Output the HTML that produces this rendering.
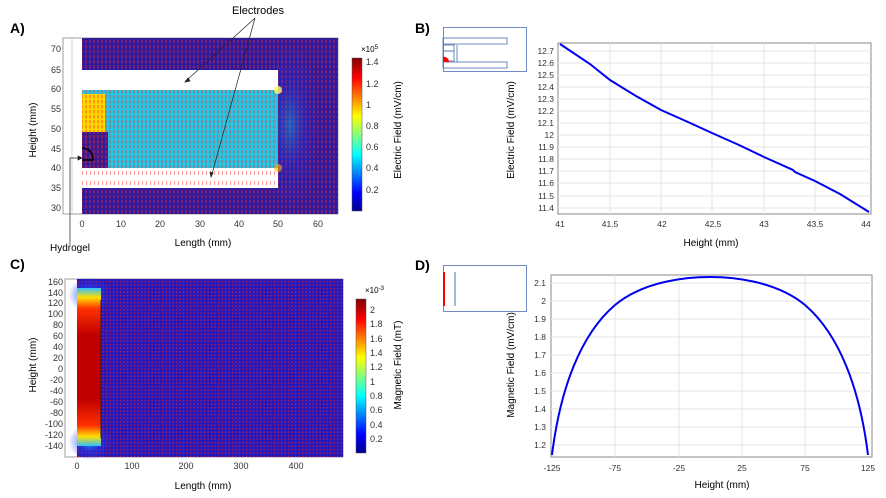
<!DOCTYPE html>
<html><head><meta charset="utf-8"><style>
html,body{margin:0;padding:0;background:#fff;width:886px;height:498px;overflow:hidden}
svg{display:block;font-family:"Liberation Sans",sans-serif}
</style></head><body>
<svg width="886" height="498" viewBox="0 0 886 498" xmlns="http://www.w3.org/2000/svg">
<defs>
<pattern id="ar" width="4" height="5" patternUnits="userSpaceOnUse"><rect x="1.5" y="0" width="1" height="3.5" fill="#ff2a2a" opacity="0.75"/></pattern>
<pattern id="ar2" width="3.5" height="3.5" patternUnits="userSpaceOnUse"><rect x="1" y="1" width="1.3" height="1.3" fill="#d8203a" opacity="0.8"/></pattern>
<linearGradient id="jet" x1="0" y1="1" x2="0" y2="0">
<stop offset="0" stop-color="#00008f"/><stop offset="0.12" stop-color="#0000ff"/><stop offset="0.37" stop-color="#00ffff"/><stop offset="0.62" stop-color="#ffff00"/><stop offset="0.87" stop-color="#ff0000"/><stop offset="1" stop-color="#800000"/></linearGradient>
<radialGradient id="glow" cx="0.5" cy="0.5" r="0.5"><stop offset="0" stop-color="#00e0ff"/><stop offset="0.5" stop-color="#2040ff" stop-opacity="0.6"/><stop offset="1" stop-color="#2040ff" stop-opacity="0"/></radialGradient>
<linearGradient id="redbar" x1="0" y1="0" x2="0" y2="1"><stop offset="0" stop-color="#30c0ff"/><stop offset="0.06" stop-color="#ffe000"/><stop offset="0.13" stop-color="#ff3000"/><stop offset="0.3" stop-color="#c00000"/><stop offset="0.7" stop-color="#c00000"/><stop offset="0.87" stop-color="#ff3000"/><stop offset="0.94" stop-color="#ffe000"/><stop offset="1" stop-color="#30c0ff"/></linearGradient>
</defs>

<!-- ===== Panel A ===== -->
<text x="10" y="33" font-size="14" font-weight="bold">A)</text>
<text x="232" y="14" font-size="11">Electrodes</text>
<rect x="63" y="38" width="275" height="176" fill="#fff" stroke="#888" stroke-width="0.8"/>
<rect x="82" y="38" width="256" height="176" fill="#2a1aa0"/>
<rect x="82" y="38" width="256" height="176" fill="url(#ar)"/>
<rect x="260" y="40" width="60" height="170" fill="url(#glow)" opacity="0.35"/>
<rect x="82" y="70" width="196" height="20" fill="#fff"/>
<rect x="82" y="90" width="196" height="78" fill="#22c8e8"/>
<rect x="82" y="90" width="196" height="78" fill="url(#ar)"/>
<rect x="82" y="94" width="23" height="38" fill="#ffd800"/>
<rect x="82" y="94" width="23" height="38" fill="url(#ar)"/>
<rect x="82" y="132" width="26" height="36" fill="#3a1a90"/>
<rect x="82" y="132" width="26" height="36" fill="url(#ar)"/>
<path d="M82,148 A11,11 0 0 1 93,160 L82,160" fill="none" stroke="#000" stroke-width="1.5"/>
<rect x="82" y="168" width="196" height="20" fill="#fff"/>
<g stroke="#ff3030" stroke-width="1" stroke-dasharray="1 3">
<line x1="82" y1="172" x2="278" y2="172"/><line x1="82" y1="174" x2="278" y2="174"/>
<line x1="82" y1="182" x2="278" y2="182"/><line x1="82" y1="184" x2="278" y2="184"/></g>
<circle cx="278" cy="90" r="4" fill="#ffff60" opacity="0.8"/>
<circle cx="278" cy="168" r="4" fill="#ffb000" opacity="0.6"/>
<line x1="72" y1="38" x2="72" y2="214" stroke="#aaa" stroke-width="0.5"/>
<g font-size="9" fill="#333" text-anchor="end">
<text x="61" y="52">70</text><text x="61" y="73">65</text><text x="61" y="92">60</text><text x="61" y="112">55</text><text x="61" y="132">50</text><text x="61" y="152">45</text><text x="61" y="171">40</text><text x="61" y="191">35</text><text x="61" y="211">30</text></g>
<g font-size="9" fill="#333" text-anchor="middle">
<text x="82" y="227">0</text><text x="121" y="227">10</text><text x="160" y="227">20</text><text x="200" y="227">30</text><text x="239" y="227">40</text><text x="278" y="227">50</text><text x="318" y="227">60</text></g>
<text x="203" y="246" font-size="10" text-anchor="middle">Length (mm)</text>
<text transform="translate(36,130) rotate(-90)" font-size="10" text-anchor="middle">Height (mm)</text>
<rect x="352" y="58" width="10" height="153" fill="url(#jet)" stroke="#555" stroke-width="0.5"/>
<text x="361" y="52" font-size="8">×10<tspan dy="-3" font-size="6">5</tspan></text>
<g font-size="9" fill="#333"><text x="366" y="65">1.4</text><text x="366" y="87">1.2</text><text x="366" y="108">1</text><text x="366" y="129">0.8</text><text x="366" y="150">0.6</text><text x="366" y="171">0.4</text><text x="366" y="193">0.2</text></g>
<text transform="translate(401,130) rotate(-90)" font-size="10" text-anchor="middle">Electric Field (mV/cm)</text>
<g stroke="#222" stroke-width="0.7" fill="#222">
<line x1="255" y1="18" x2="187" y2="80"/><path d="M185,82 l5,-1 -2,-3z"/>
<line x1="255" y1="18" x2="212" y2="174"/><path d="M211,177 l-1,-5 3,1z"/>
<polyline points="70,245 70,158 80,158" fill="none"/><path d="M82,158 l-4,-2 0,4z"/></g>
<text x="50" y="251" font-size="10">Hydrogel</text>

<!-- ===== Panel C ===== -->
<text x="10" y="269" font-size="14" font-weight="bold">C)</text>
<rect x="65" y="279" width="278" height="178" fill="#fff" stroke="#888" stroke-width="0.8"/>
<rect x="77" y="279" width="266" height="178" fill="#2818b8"/>
<rect x="77" y="279" width="266" height="178" fill="url(#ar2)"/>
<ellipse cx="90" cy="295" rx="22" ry="18" fill="url(#glow)" opacity="0.8"/>
<ellipse cx="90" cy="442" rx="22" ry="18" fill="url(#glow)" opacity="0.8"/>
<rect x="77" y="288" width="24" height="158" fill="url(#redbar)"/>
<line x1="101" y1="300" x2="101" y2="438" stroke="#222" stroke-width="1"/>
<g font-size="9" fill="#333" text-anchor="end">
<text x="63" y="285">160</text><text x="63" y="296">140</text><text x="63" y="306">120</text><text x="63" y="317">100</text><text x="63" y="328">80</text><text x="63" y="339">60</text><text x="63" y="350">40</text><text x="63" y="361">20</text><text x="63" y="372">0</text><text x="63" y="383">-20</text><text x="63" y="394">-40</text><text x="63" y="405">-60</text><text x="63" y="416">-80</text><text x="63" y="427">-100</text><text x="63" y="438">-120</text><text x="63" y="449">-140</text></g>
<g font-size="9" fill="#333" text-anchor="middle">
<text x="77" y="469">0</text><text x="132" y="469">100</text><text x="186" y="469">200</text><text x="241" y="469">300</text><text x="296" y="469">400</text></g>
<text x="203" y="489" font-size="10" text-anchor="middle">Length (mm)</text>
<text transform="translate(36,365) rotate(-90)" font-size="10" text-anchor="middle">Height (mm)</text>
<rect x="356" y="299" width="10" height="154" fill="url(#jet)" stroke="#555" stroke-width="0.5"/>
<text x="365" y="293" font-size="8">×10<tspan dy="-3" font-size="6">-3</tspan></text>
<g font-size="9" fill="#333"><text x="370" y="313">2</text><text x="370" y="327">1.8</text><text x="370" y="342">1.6</text><text x="370" y="356">1.4</text><text x="370" y="370">1.2</text><text x="370" y="385">1</text><text x="370" y="399">0.8</text><text x="370" y="413">0.6</text><text x="370" y="428">0.4</text><text x="370" y="442">0.2</text></g>
<text transform="translate(401,365) rotate(-90)" font-size="10" text-anchor="middle">Magnetic Field (mT)</text>

<!-- ===== Panel B ===== -->
<text x="415" y="33" font-size="14" font-weight="bold">B)</text>
<rect x="443.5" y="27.5" width="83" height="44" fill="#fff" stroke="#4a70b0" stroke-width="0.8"/>
<g fill="none" stroke="#4a70b0" stroke-width="0.8">
<rect x="443" y="38" width="64" height="6"/><rect x="443" y="62" width="64" height="6"/>
<rect x="443" y="45" width="11" height="6"/><rect x="443" y="51" width="11" height="10"/><line x1="457" y1="45" x2="457" y2="62"/></g>
<path d="M443,57 A5,5 0 0 1 449,62 L443,62z" fill="#f00"/>
<rect x="558" y="43" width="313" height="171" fill="#fff" stroke="#888" stroke-width="1"/>
<g stroke="#e6e6e6" stroke-width="1">
<line x1="610" y1="43" x2="610" y2="214"/><line x1="661" y1="43" x2="661" y2="214"/><line x1="712" y1="43" x2="712" y2="214"/><line x1="764" y1="43" x2="764" y2="214"/><line x1="815" y1="43" x2="815" y2="214"/>
<line x1="558" y1="51" x2="871" y2="51"/><line x1="558" y1="63" x2="871" y2="63"/><line x1="558" y1="75" x2="871" y2="75"/><line x1="558" y1="87" x2="871" y2="87"/><line x1="558" y1="99" x2="871" y2="99"/><line x1="558" y1="111" x2="871" y2="111"/><line x1="558" y1="123" x2="871" y2="123"/><line x1="558" y1="135" x2="871" y2="135"/><line x1="558" y1="147" x2="871" y2="147"/><line x1="558" y1="159" x2="871" y2="159"/><line x1="558" y1="171" x2="871" y2="171"/><line x1="558" y1="183" x2="871" y2="183"/><line x1="558" y1="196" x2="871" y2="196"/><line x1="558" y1="208" x2="871" y2="208"/></g>
<polyline points="560,44 590,64 610,80 636,96 661,110 688,122 712,133 739,145 764,157 793,170 795,172 815,181 840,194 869,212" fill="none" stroke="#0000ee" stroke-width="2"/>
<g font-size="8.5" fill="#333" text-anchor="end">
<text x="554" y="54">12.7</text><text x="554" y="66">12.6</text><text x="554" y="78">12.5</text><text x="554" y="90">12.4</text><text x="554" y="102">12.3</text><text x="554" y="114">12.2</text><text x="554" y="126">12.1</text><text x="554" y="138">12</text><text x="554" y="150">11.9</text><text x="554" y="162">11.8</text><text x="554" y="174">11.7</text><text x="554" y="186">11.6</text><text x="554" y="199">11.5</text><text x="554" y="211">11.4</text></g>
<g font-size="8.5" fill="#333" text-anchor="middle">
<text x="560" y="227">41</text><text x="610" y="227">41.5</text><text x="662" y="227">42</text><text x="713" y="227">42.5</text><text x="764" y="227">43</text><text x="815" y="227">43.5</text><text x="866" y="227">44</text></g>
<text x="711" y="246" font-size="10" text-anchor="middle">Height (mm)</text>
<text transform="translate(514,130) rotate(-90)" font-size="10" text-anchor="middle">Electric Field (mV/cm)</text>

<!-- ===== Panel D ===== -->
<text x="415" y="270" font-size="14" font-weight="bold">D)</text>
<rect x="443.5" y="265.5" width="83" height="46" fill="#fff" stroke="#4a70b0" stroke-width="0.8"/>
<rect x="443" y="272" width="2" height="34" fill="#f00"/>
<line x1="455" y1="272" x2="455" y2="306" stroke="#4a70b0" stroke-width="1"/>
<rect x="551" y="275" width="321" height="182" fill="#fff" stroke="#888" stroke-width="1"/>
<g stroke="#e6e6e6" stroke-width="1">
<line x1="615" y1="275" x2="615" y2="457"/><line x1="679" y1="275" x2="679" y2="457"/><line x1="742" y1="275" x2="742" y2="457"/><line x1="805" y1="275" x2="805" y2="457"/>
<line x1="551" y1="283" x2="872" y2="283"/><line x1="551" y1="301" x2="872" y2="301"/><line x1="551" y1="319" x2="872" y2="319"/><line x1="551" y1="337" x2="872" y2="337"/><line x1="551" y1="355" x2="872" y2="355"/><line x1="551" y1="373" x2="872" y2="373"/><line x1="551" y1="391" x2="872" y2="391"/><line x1="551" y1="409" x2="872" y2="409"/><line x1="551" y1="427" x2="872" y2="427"/><line x1="551" y1="445" x2="872" y2="445"/></g>
<path d="M552,455 C560,390 580,335 615,305 C645,280 690,277 710,277 C730,277 775,280 805,305 C840,335 860,390 868,455" fill="none" stroke="#0000ee" stroke-width="2"/>
<g font-size="8.5" fill="#333" text-anchor="end">
<text x="546" y="286">2.1</text><text x="546" y="304">2</text><text x="546" y="322">1.9</text><text x="546" y="340">1.8</text><text x="546" y="358">1.7</text><text x="546" y="376">1.6</text><text x="546" y="394">1.5</text><text x="546" y="412">1.4</text><text x="546" y="430">1.3</text><text x="546" y="448">1.2</text></g>
<g font-size="8.5" fill="#333" text-anchor="middle">
<text x="552" y="471">-125</text><text x="615" y="471">-75</text><text x="679" y="471">-25</text><text x="742" y="471">25</text><text x="805" y="471">75</text><text x="868" y="471">125</text></g>
<text x="722" y="488" font-size="10" text-anchor="middle">Height (mm)</text>
<text transform="translate(514,365) rotate(-90)" font-size="10" text-anchor="middle">Magnetic Field (mV/cm)</text>
</svg>
</body></html>
